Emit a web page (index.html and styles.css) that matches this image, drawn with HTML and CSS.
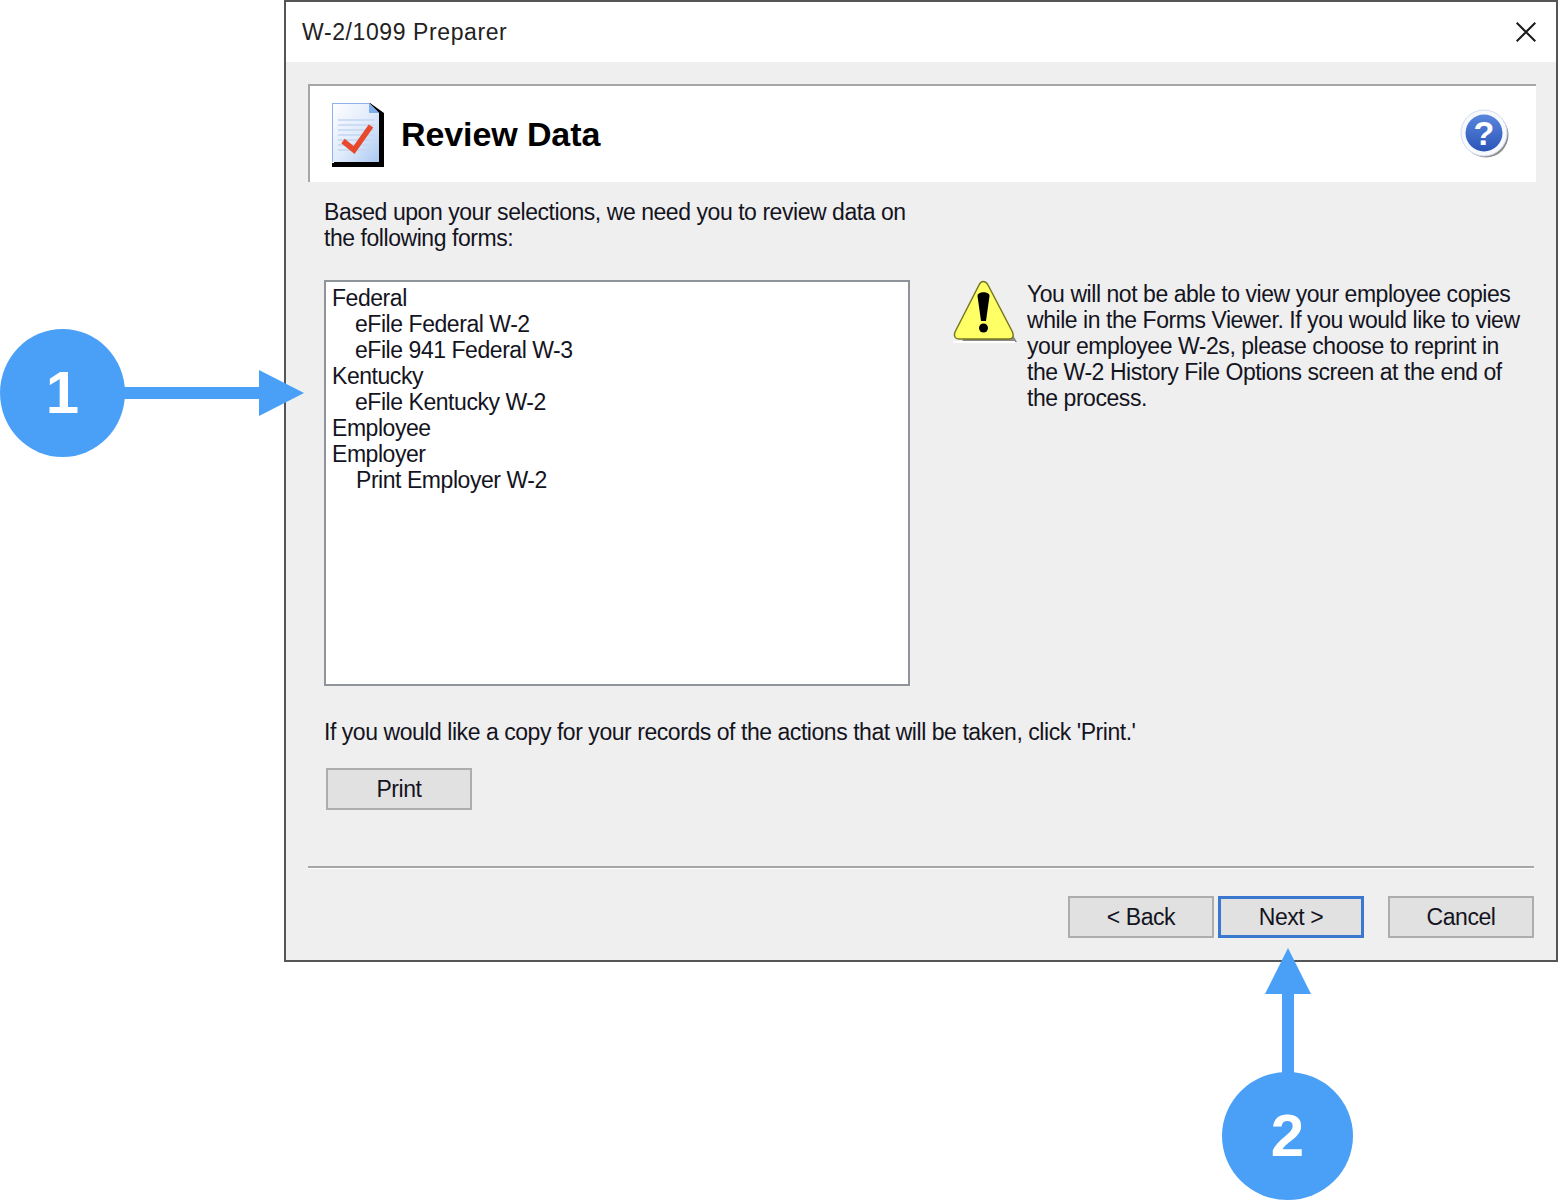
FILE: index.html
```html
<!DOCTYPE html>
<html lang="en">
<head>
<meta charset="utf-8">
<title>W-2/1099 Preparer</title>
<link rel="stylesheet" href="styles.css">
</head>
<body>
<div class="window">
  <div class="titlebar">
    <span class="title">W-2/1099 Preparer</span>
    <svg class="close" width="20" height="20" viewBox="0 0 20 20"><path d="M0.7 0.7L19.3 19.3M19.3 0.7L0.7 19.3" stroke="#1c1c1c" stroke-width="2" fill="none"/></svg>
  </div>
  <div class="content">
    <div class="header">
      <svg class="doc-icon" width="52" height="64" viewBox="0 0 52 64">
        <defs><linearGradient id="pg" x1="0" y1="0" x2="1" y2="1"><stop offset="0" stop-color="#ffffff"/><stop offset="0.55" stop-color="#dfeafb"/><stop offset="1" stop-color="#a9c8f2"/></linearGradient></defs>
        <path d="M2 0H38L52 10V64H0V60H2Z" fill="#000"/>
        <path d="M0 0H37L47 10V59H0Z" fill="url(#pg)"/>
        <path d="M0 0H37V1H1V59H0Z" fill="#8fb0e8"/>
        <path d="M37 0L47 10H37Z" fill="#7fb0ee"/>
        <path d="M6 17H42M6 22H42M6 27H42M6 32H42M6 37H42M6 42H42M6 47H42" stroke="#c3d6f2" stroke-width="1.6"/>
        <path d="M11 38L22 47L39 23" stroke="#e8482c" stroke-width="5.5" fill="none"/>
      </svg>
      <h1 class="heading">Review Data</h1>
      <svg class="help-icon" width="50" height="50" viewBox="0 0 50 50">
        <defs><linearGradient id="hb" x1="0" y1="0" x2="0" y2="1"><stop offset="0" stop-color="#5b86dc"/><stop offset="1" stop-color="#2a55b8"/></linearGradient></defs>
        <circle cx="26" cy="26" r="22.5" fill="#8c8c8c"/>
        <circle cx="24" cy="24" r="23" fill="#f7f9fd" stroke="#d4dcef" stroke-width="1"/>
        <circle cx="24" cy="24" r="18.5" fill="url(#hb)"/>
        <text class="help-mark" x="24" y="36" text-anchor="middle">?</text>
      </svg>
    </div>
    <p class="intro">Based upon your selections, we need you to review data on<br>the following forms:</p>
    <div class="columns">
      <div class="listbox">
        <div class="item">Federal</div>
        <div class="item sub">eFile Federal W-2</div>
        <div class="item sub">eFile 941 Federal W-3</div>
        <div class="item">Kentucky</div>
        <div class="item sub">eFile Kentucky W-2</div>
        <div class="item">Employee</div>
        <div class="item">Employer</div>
        <div class="item sub print">Print Employer W-2</div>
      </div>
      <div class="notice">
        <svg class="warn-icon" width="66" height="66" viewBox="0 0 66 66">
          <path d="M33 8L64 62H9Z" fill="#8a8a8a"/>
          <path d="M30 1.5C28 1.5 27 3 26 5L2 52C0.5 56 2 59 6 59H56C60 59 61 56 59.5 52L35 5C34 3 32.5 1.500 30 1.500Z" fill="#ffff66" stroke="#77771f" stroke-width="1.500"/>
          <path d="M0 62H62" stroke="#fff" stroke-width="2"/>
          <path d="M24.500 16C24.500 11 36.500 11 36.500 16L33 41H28Z" fill="#000"/>
          <circle cx="30.500" cy="48" r="4.500" fill="#000"/>
        </svg>
        <p class="notice-text">You will not be able to view your employee copies<br>while in the Forms Viewer. If you would like to view<br>your employee W-2s, please choose to reprint in<br>the W-2 History File Options screen at the end of<br>the process.</p>
      </div>
    </div>
    <p class="copy-note">If you would like a copy for your records of the actions that will be taken, click 'Print.'</p>
    <button class="btn print-btn">Print</button>
    <div class="separator"></div>
    <div class="actions">
      <button class="btn">&lt; Back</button>
      <button class="btn primary">Next &gt;</button>
      <button class="btn cancel">Cancel</button>
    </div>
  </div>
</div>

<div class="badge badge-one">1</div>
<svg class="arrow arrow-one" width="180" height="46" viewBox="0 0 180 46"><path d="M0 17H135V0L180 23L135 46V29H0Z" fill="#4a9ff7"/></svg>
<svg class="arrow arrow-two" width="46" height="128" viewBox="0 0 46 128"><path d="M17 128V46H0L23 0L46 46H29V128Z" fill="#4a9ff7"/></svg>
<div class="badge badge-two">2</div>
</body>
</html>
```
FILE: styles.css
```css
* { box-sizing: border-box; }
html, body { margin: 0; padding: 0; }
body {
  position: relative;
  width: 1558px;
  height: 1201px;
  overflow: hidden;
  background: #fff;
  font-family: "Liberation Sans", Arial, sans-serif;
  font-size: 23px;
  line-height: 26px;
  letter-spacing: -0.45px;
  color: #14141e;
}
.window {
  position: absolute;
  left: 284px;
  top: 0;
  width: 1274px;
  height: 962px;
  border: 2px solid #555;
  background: #efefef;
}
.titlebar {
  height: 60px;
  background: #fff;
  display: flex;
  align-items: center;
  justify-content: space-between;
  padding: 0 20px 0 16px;
}
.title { letter-spacing: 0.6px; color: #222; position: relative; }
.content { padding: 22px 22px 0; }
.header {
  width: 1228px;
  height: 98px;
  background: #fff;
  border-top: 2px solid #a6a6a6;
  border-left: 2px solid #a6a6a6;
  display: flex;
  align-items: center;
  padding: 0 26px 0 22px;
}
.doc-icon { flex: none; margin-top: 2px; }
.heading {
  margin: 0 0 0 17px;
  font-size: 34px;
  font-weight: bold;
  letter-spacing: -0.1px;
  color: #000;
  flex: 1;
}
.help-icon { flex: none; margin-top: 0; }
.help-mark { font: bold 34px "Liberation Sans", sans-serif; fill: #fff; letter-spacing: 0; }
.intro { margin: 17px 0 0 16px; }
.columns { display: flex; margin: 29px 0 0 16px; }
.listbox {
  width: 586px;
  height: 406px;
  flex: none;
  background: #fff;
  border: 2px solid #8f939a;
  padding: 3px 6px;
}
.sub { padding-left: 23px; }
.print { padding-left: 24px; }
.notice { display: flex; margin-left: 43px; }
.warn-icon { flex: none; margin-right: 8px; }
.notice-text { margin: 1px 0 0; }
.copy-note { margin: 33px 0 0 16px; }
.btn {
  display: block;
  width: 146px;
  height: 42px;
  border: 2px solid #adadad;
  background: #e1e1e1;
  font: inherit;
  letter-spacing: inherit;
  color: inherit;
  padding: 0;
}
.print-btn { margin: 23px 0 0 18px; }
.separator {
  width: 1226px;
  height: 3px;
  margin-top: 56px;
  border-top: 2px solid #a6a6a6;
  border-bottom: 1px solid #fff;
}
.actions {
  display: flex;
  justify-content: flex-end;
  gap: 4px;
  width: 1226px;
  margin-top: 27px;
}
.primary { border-color: #3a78d0; border-width: 3px; }
.cancel { margin-left: 20px; }
.badge {
  position: absolute;
  display: flex;
  align-items: center;
  justify-content: center;
  background: #4a9ff7;
  color: #fff;
  border-radius: 50%;
  font-size: 60px;
  font-weight: bold;
  letter-spacing: 0;
  line-height: 1;
}
.badge-one { left: 0; top: 329px; width: 125px; height: 128px; }
.badge-two { left: 1222px; top: 1072px; width: 131px; height: 128px; }
.arrow { position: absolute; display: block; }
.arrow-one { left: 124px; top: 370px; }
.arrow-two { left: 1265px; top: 948px; }
```
